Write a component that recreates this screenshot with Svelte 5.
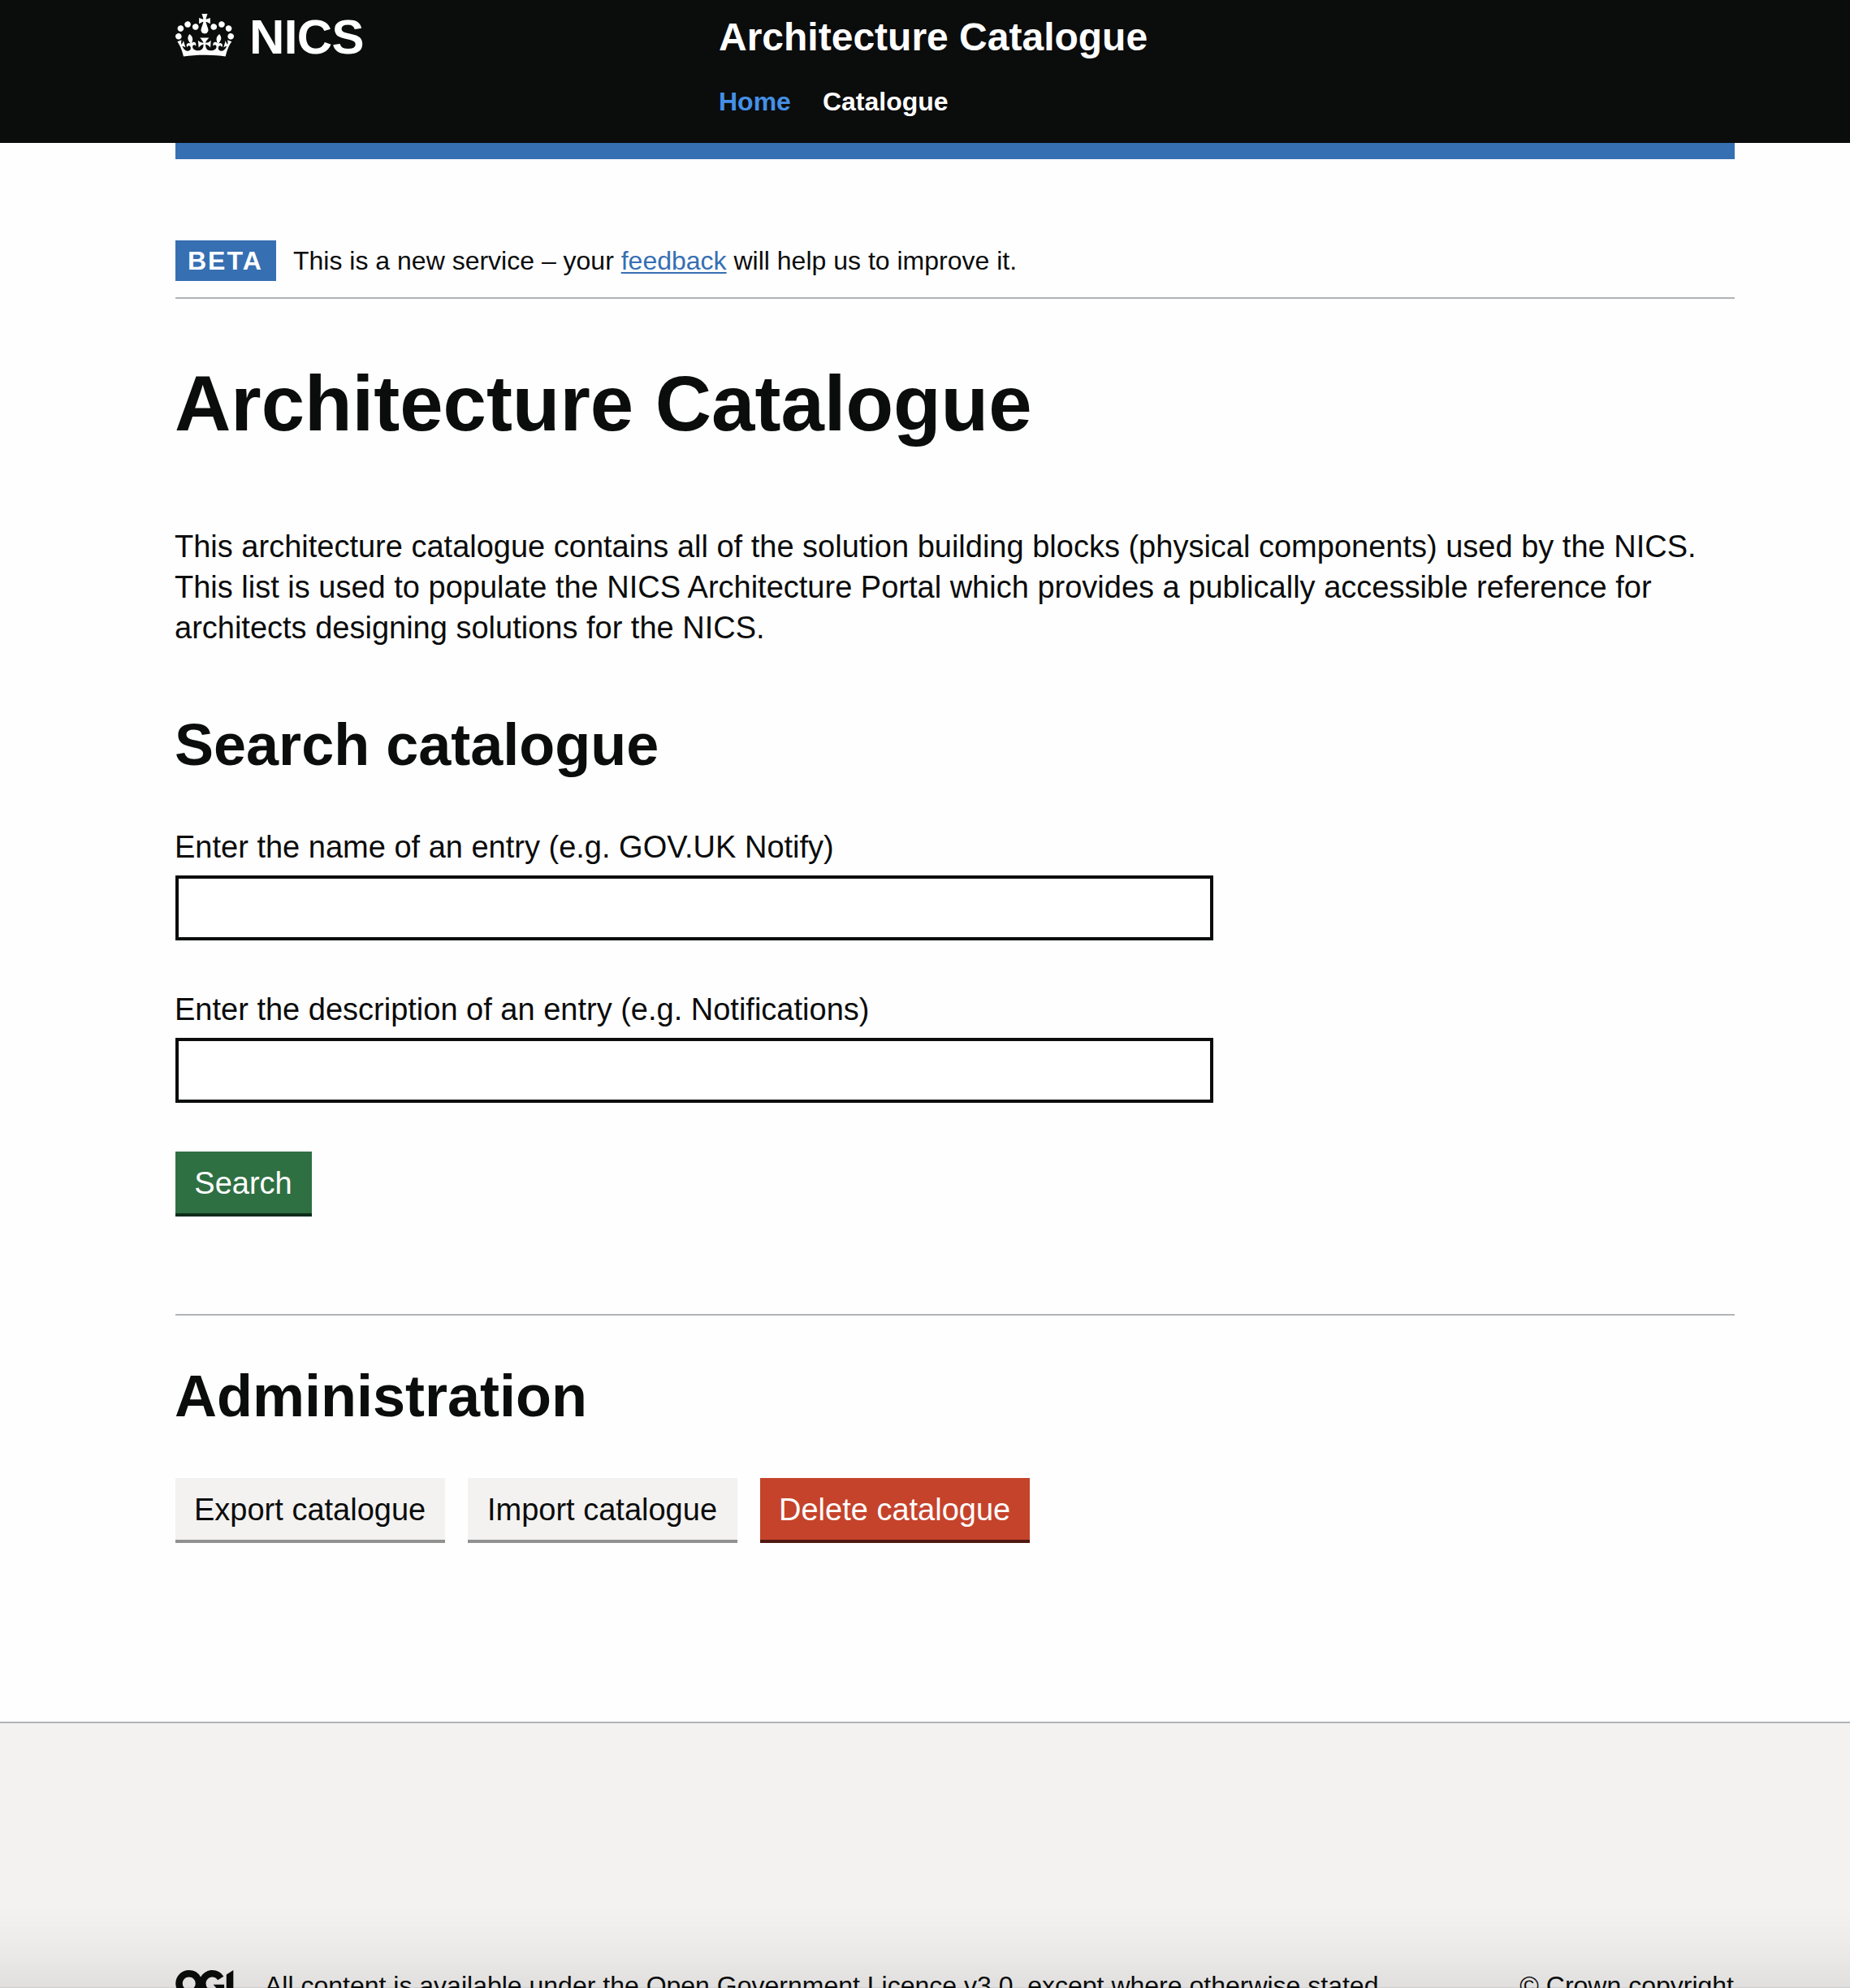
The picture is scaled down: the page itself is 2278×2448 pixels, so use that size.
<script>
  const navigation = [
    { label: 'Home', current: true },
    { label: 'Catalogue', current: false }
  ];
  const fields = [
    { id: 'name', label: 'Enter the name of an entry (e.g. GOV.UK Notify)' },
    { id: 'description', label: 'Enter the description of an entry (e.g. Notifications)' }
  ];
  const actions = [
    { label: 'Export catalogue', kind: 'secondary' },
    { label: 'Import catalogue', kind: 'secondary' },
    { label: 'Delete catalogue', kind: 'warning' }
  ];
</script>

<div class="page">
  <header class="header">
    <div class="container header-grid">
      <a class="brand" href="#home">
        <svg class="crown" viewBox="0 0 132 97" aria-hidden="true">
          <path fill="currentColor" fill-rule="evenodd" d="M25 30.2c3.5 1.5 7.7-.2 9.1-3.7 1.5-3.6-.2-7.8-3.9-9.2-3.6-1.4-7.6.3-9.1 3.9-1.4 3.5.3 7.5 3.9 9zM9 39.5c3.6 1.5 7.8-.2 9.2-3.7 1.5-3.6-.2-7.8-3.9-9.1-3.6-1.5-7.6.2-9.1 3.8-1.4 3.5.3 7.5 3.8 9zM4.4 57.2c3.5 1.5 7.7-.2 9.1-3.8 1.5-3.6-.2-7.7-3.9-9.1-3.5-1.5-7.6.3-9.1 3.8-1.4 3.5.3 7.6 3.9 9.1zm38.3-21.4c3.5 1.5 7.7-.2 9.1-3.8 1.5-3.6-.2-7.7-3.9-9.1-3.6-1.5-7.6.3-9.1 3.8-1.3 3.6.4 7.7 3.9 9.1zm64.4-5.6c-3.6 1.5-7.8-.2-9.1-3.7-1.5-3.6.2-7.8 3.8-9.2 3.6-1.4 7.7.3 9.2 3.9 1.3 3.5-.4 7.5-3.9 9zm15.9 9.3c-3.6 1.5-7.7-.2-9.1-3.7-1.5-3.6.2-7.8 3.7-9.1 3.6-1.5 7.7.2 9.2 3.8 1.5 3.5-.3 7.5-3.8 9zm4.7 17.7c-3.6 1.5-7.8-.2-9.2-3.8-1.5-3.6.2-7.7 3.9-9.1 3.6-1.5 7.7.3 9.2 3.8 1.3 3.5-.4 7.6-3.9 9.1zM89.3 35.8c-3.6 1.5-7.8-.2-9.2-3.8-1.4-3.6.2-7.7 3.9-9.1 3.6-1.5 7.7.3 9.2 3.8 1.4 3.6-.3 7.7-3.9 9.1zM69.7 17.7l8.9 4.7V9.3l-8.9 2.8c-.2-.3-.5-.6-.9-.9L72.4 0H59.6l3.5 11.2c-.3.3-.6.5-.9.9l-8.8-2.8v13.1l8.8-4.7c.3.3.6.7.9.9l-5 15.4v.1c-.2.8-.4 1.6-.4 2.4 0 4.1 3.1 7.5 7 8.1h.2c.3 0 .7.1 1 .1.4 0 .7 0 1-.1h.2c4-.6 7.1-4.1 7.1-8.1 0-.8-.1-1.7-.4-2.4V34l-5.1-15.4c.4-.2.7-.6 1-.9zM66 92.8c16.9 0 32.8 1.1 47.1 3.2 4-16.9 8.9-26.7 14-33.5l-9.6-3.4c1 4.9 1.1 7.2 0 10.2-1.5-1.4-3-4.3-4.2-8.7L108.6 76c2.8-2 5-3.2 7.5-3.3-4.4 9.4-10 11.9-13.6 11.2-4.3-.8-6.3-4.6-5.6-7.9 1-4.7 5.7-5.9 8-.5 4.3-8.7-3-11.4-7.6-8.8 7.1-7.2 7.9-13.5 2.1-21.1-8 6.1-8.1 12.3-4.5 20.8-4.7-5.4-12.1-2.5-9.5 6.2 3.4-5.2 7.9-2 7.2 3.1-.6 4.3-6.4 7.8-13.5 7.2-10.3-.9-10.9-8-11.2-13.8 2.5-.5 7.1 1.8 11 7.3L80.2 60c-4.1 4.4-8 5.3-12.3 5.4 1.4-4.4 8-11.6 8-11.6H55.5s6.4 7.2 7.9 11.6c-4.2-.1-8-1-12.3-5.4l1.4 16.4c3.9-5.5 8.5-7.7 10.9-7.3-.3 5.8-.9 12.8-11.1 13.8-7.2.6-12.9-2.9-13.5-7.2-.7-5 3.8-8.3 7.1-3.1 2.7-8.7-4.6-11.6-9.4-6.2 3.7-8.5 3.6-14.7-4.6-20.8-5.8 7.6-5 13.9 2.2 21.1-4.7-2.6-11.9.1-7.7 8.8 2.3-5.5 7.1-4.2 8.1.5.7 3.3-1.3 7.1-5.7 7.9-3.5.7-9-1.8-13.5-11.2 2.5.1 4.7 1.3 7.5 3.3l-4.7-15.4c-1.2 4.4-2.7 7.2-4.3 8.7-1.1-3-.9-5.3 0-10.2l-9.5 3.4c5 6.9 9.9 16.7 14 33.5 14.8-2.1 30.8-3.2 47.7-3.2z" />
        </svg>
        <span>NICS</span>
      </a>
      <div class="service">
        <a class="service-name" href="#service">Architecture Catalogue</a>
        <nav class="nav">
          {#each navigation as item}
            <a class:current={item.current} href="#{item.label}">{item.label}</a>
          {/each}
        </nav>
      </div>
    </div>
  </header>

  <div class="container">
    <div class="header-bar"></div>
    <div class="phase">
      <strong class="tag">BETA</strong>
      <span>This is a new service – your <a class="link" href="#feedback">feedback</a> will help us to improve it.</span>
    </div>

    <main>
      <h1>Architecture Catalogue</h1>
      <p class="intro">
        This architecture catalogue contains all of the solution building blocks (physical components) used by the NICS.
        This list is used to populate the NICS Architecture Portal which provides a publically accessible reference for
        architects designing solutions for the NICS.
      </p>

      <h2>Search catalogue</h2>
      <form>
        {#each fields as field}
          <div class="field">
            <label for={field.id}>{field.label}</label>
            <input id={field.id} type="text" />
          </div>
        {/each}
        <button class="button primary" type="button">Search</button>
      </form>

      <section class="admin">
        <h2>Administration</h2>
        <div class="actions">
          {#each actions as action}
            <button class="button {action.kind}" type="button">{action.label}</button>
          {/each}
        </div>
      </section>
    </main>
  </div>

  <footer class="footer">
    <div class="container footer-row">
      <svg class="ogl" viewBox="0 0 483.2 195.7" aria-hidden="true">
        <path fill="currentColor" d="M421.5 142.8V.1l-50.7 32.3v161.1h112.4v-50.7zm-122.3-9.6A47.12 47.12 0 0 1 221 97.8c0-26 21.1-47.1 47.1-47.1 16.7 0 31.4 8.7 39.7 21.8l42.7-27.2A97.63 97.63 0 0 0 268.1 0c-36.5 0-68.3 20.1-85.1 49.7A98 98 0 0 0 97.8 0C43.9 0 0 43.9 0 97.8s43.9 97.8 97.8 97.8c36.5 0 68.3-20.1 85.1-49.7a97.76 97.76 0 0 0 149.6 25.4l19.4 22.2h3v-87.8h-80l24.3 27.5zM97.8 145c-26 0-47.1-21.1-47.1-47.1s21.1-47.1 47.1-47.1 47.1 21.1 47.1 47.1S123.8 145 97.8 145" />
      </svg>
      <span class="licence">All content is available under the Open Government Licence v3.0, except where otherwise stated</span>
      <span class="copyright">© Crown copyright</span>
    </div>
  </footer>
  <div class="shade"></div>
</div>

<style>
  :global(body) {
    margin: 0;
    background: #fff;
  }

  .page {
    position: relative;
    display: flex;
    flex-direction: column;
    width: 2278px;
    height: 2448px;
    overflow: hidden;
    background: #fefefe;
    color: #0b0c0c;
    font-family: 'Liberation Sans', Arial, sans-serif;
    font-size: 38px;
    line-height: 50px;
  }

  .container {
    box-sizing: border-box;
    width: 1920px;
    margin-left: 216px;
  }

  .header {
    flex: none;
    height: 176px;
    background: #0b0c0c;
    color: #fff;
  }

  .header-grid {
    display: grid;
    grid-template-columns: 669px 1fr;
    padding-top: 16px;
  }

  .header a {
    color: inherit;
    font-weight: 700;
    text-decoration: none;
  }

  .brand {
    display: flex;
    align-items: flex-start;
    gap: 19px;
    font-size: 60px;
    line-height: 60px;
    letter-spacing: -0.6px;
  }

  .crown {
    width: 72px;
    height: 53px;
    margin-top: 1px;
  }

  .service {
    display: flex;
    flex-direction: column;
    gap: 29px;
  }

  .service-name {
    font-size: 48px;
    line-height: 60px;
  }

  .nav {
    display: flex;
    gap: 39px;
    font-size: 32px;
    line-height: 40px;
  }

  .nav .current {
    color: #4590e6;
  }

  .header-bar {
    height: 20px;
    background: #366fb2;
  }

  .phase {
    display: flex;
    align-items: center;
    gap: 21px;
    margin-top: 100px;
    padding-bottom: 20px;
    border-bottom: 2px solid #b1b4b6;
    font-size: 32px;
  }

  .tag {
    box-sizing: border-box;
    width: 124px;
    padding-left: 15px;
    background: #366fb2;
    color: #fff;
    letter-spacing: 2px;
  }

  .link {
    color: #366fb2;
    text-decoration: underline;
    text-decoration-thickness: 2px;
    text-underline-offset: 3px;
  }

  h1,
  h2,
  p {
    margin: 0;
  }

  h1,
  h2,
  .intro,
  label {
    text-indent: -1px;
  }

  h1 {
    margin-top: 79px;
    font-size: 96px;
    line-height: 100px;
    letter-spacing: -0.03px;
  }

  .intro {
    margin: 101px 0 0 -1px;
    text-indent: 0;
  }

  h2 {
    margin: 81px 0 63px;
    font-size: 72px;
    line-height: 76px;
  }

  .field {
    display: flex;
    flex-direction: column;
    gap: 10px;
    margin-bottom: 60px;
  }

  input {
    box-sizing: border-box;
    width: 1278px;
    height: 80px;
    padding: 10px;
    border: 4px solid #0b0c0c;
    border-radius: 0;
    background: #fff;
    font: inherit;
  }

  .button {
    display: block;
    box-sizing: border-box;
    height: 80px;
    padding: 2px 24px 0 23px;
    border: 0;
    border-bottom: 4px solid;
    border-radius: 0;
    font: inherit;
    white-space: nowrap;
  }

  .actions .button {
    width: 332px;
  }

  .primary {
    width: 168px;
    background: #2f7043;
    border-color: #0f2d1b;
    color: #fff;
  }

  .secondary {
    background: #f3f2f1;
    border-color: #929191;
    color: #0b0c0c;
  }

  .warning {
    background: #c5432b;
    border-color: #501811;
    color: #fff;
  }

  .admin {
    margin-top: 120px;
    border-top: 2px solid #b1b4b6;
  }

  .admin h2 {
    margin-top: 61px;
  }

  .actions {
    display: flex;
    gap: 28px;
  }

  .footer {
    flex: none;
    height: 360px;
    margin-top: 220px;
    border-top: 2px solid #b1b4b6;
    background: #f3f2f1;
    font-size: 32px;
    line-height: 40px;
  }

  .footer-row {
    display: flex;
    align-items: flex-start;
    padding-top: 303px;
  }

  .ogl {
    width: 82px;
    height: 33px;
    margin: 1px 28px 0 0;
  }

  .copyright {
    margin: 0 1px 0 auto;
  }

  /* Soft fade over the bottom edge of the window */
  .shade {
    position: absolute;
    inset: auto 0 0;
    height: 100px;
    border-bottom: 1px solid rgba(0, 0, 0, 0.14);
    background: linear-gradient(rgba(0, 0, 0, 0), rgba(0, 0, 0, 0.027) 50%, rgba(0, 0, 0, 0.08));
    box-sizing: border-box;
  }
</style>
